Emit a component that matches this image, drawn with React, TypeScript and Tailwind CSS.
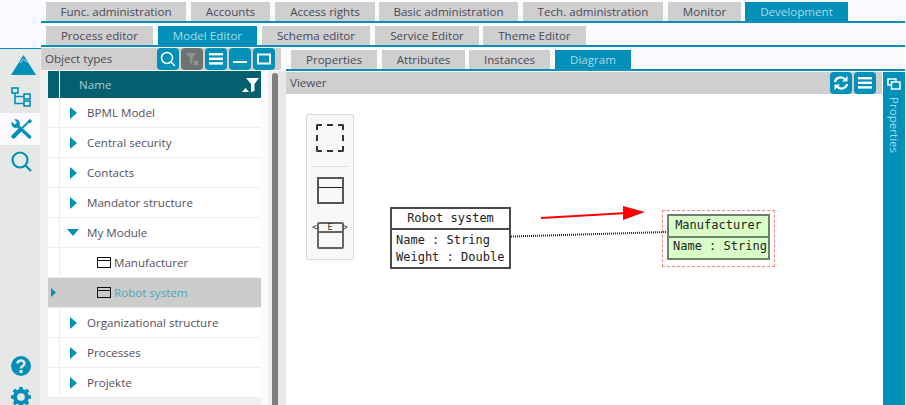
import React from "react";

const font = { fontFamily: '"Open Sans", sans-serif' };

const topTabs = [
  { label: "Func. administration", w: "w-[140px]" },
  { label: "Accounts", w: "w-[79px]" },
  { label: "Access rights", w: "w-[100px] mr-[-1px]" },
  { label: "Basic administration", w: "w-[139px]" },
  { label: "Tech. administration", w: "w-[140px]" },
  { label: "Monitor", w: "w-[73px] mr-[-1px]" },
  { label: "Development", w: "w-[103px]", active: true },
];

const subTabs = [
  { label: "Process editor", w: "w-[107px]" },
  { label: "Model Editor", w: "w-[99px]", active: true },
  { label: "Schema editor", w: "w-[108px]" },
  { label: "Service Editor", w: "w-[104px] mr-[-1px]" },
  { label: "Theme Editor", w: "w-[103px]" },
];

const detailTabs = [
  { label: "Properties", w: "w-[86px]" },
  { label: "Attributes", w: "w-[83px] mr-[-1px]" },
  { label: "Instances", w: "w-[81px]" },
  { label: "Diagram", w: "w-[76px]", active: true },
];

const Tab = ({ label, w, active }: { label: string; w: string; active?: boolean }) => (
  <div
    className={`${w} h-[19px] flex items-center justify-center text-[11.6px] leading-none ${
      active ? "bg-[#0090b8] text-[#a8dceb]" : "bg-[#cfcfcf] text-[#4a4a58]"
    }`}
  >
    {label}
  </div>
);

const IconBtn = ({ children, gray }: { children: React.ReactNode; gray?: boolean }) => (
  <div
    className={`w-[22px] h-[22px] rounded-[4px] flex items-center justify-center ${
      gray ? "bg-[#6f7272]" : "bg-[#0090b8]"
    }`}
  >
    {children}
  </div>
);

const MenuIcon = () => (
  <svg width="14" height="12" viewBox="0 0 14 12" fill="#fff">
    <rect width="14" height="2.4" />
    <rect y="4.6" width="14" height="2.4" />
    <rect y="9.2" width="14" height="2.4" />
  </svg>
);

const Arrow = ({ small }: { small?: boolean }) =>
  small ? (
    <svg width="5" height="9" viewBox="0 0 5 9" className="fill-[#0090b8]">
      <path d="M0 0 L5 4.5 L0 9 Z" />
    </svg>
  ) : (
    <svg width="7" height="12" viewBox="0 0 7 12" className="fill-[#0090b8]">
      <path d="M0 0 L7 6 L0 12 Z" />
    </svg>
  );

const ClassIcon = () => (
  <svg width="14" height="11" viewBox="0 0 14 11" fill="none" stroke="#111" strokeWidth="1">
    <rect x="0.5" y="0.5" width="13" height="10" />
    <path d="M0.5 3.5 H13.5" />
  </svg>
);

const Row = ({ label }: { label: string }) => (
  <div className="h-[30px] flex border-b border-[#eeeeee] bg-white">
    <div className="w-[12px] border-r border-[#eeeeee]" />
    <div className="w-[10px]" />
    <div className="w-[17px] flex items-center">
      <Arrow />
    </div>
    <div className="flex items-center text-[11.6px] text-[#55505c]">{label}</div>
  </div>
);

const Sidebar = () => (
  <div className="w-[41px] shrink-0 flex flex-col">
    <div className="h-[49px] shrink-0 border-b border-[#0090b8]" />
    <div className="h-[64px] shrink-0 bg-[#e6e8e8] border-r border-[#f0f0f0] flex flex-col items-start pl-[11px]">
      <svg width="25" height="20" viewBox="0 0 25 20" className="mt-[6px] shrink-0">
        <path d="M12.5 0 L25 20 H0 Z" fill="#0090b8" />
        <path d="M9 8 L12.5 4 L16 7.5" fill="none" stroke="#cfe6ee" strokeWidth="1" />
      </svg>
      <svg width="20" height="20" viewBox="0 0 20 20" fill="none" stroke="#0090b8" strokeWidth="1.6" className="mt-[12px] shrink-0">
        <rect x="1" y="1" width="6" height="5" />
        <rect x="13" y="7" width="6" height="5" />
        <rect x="13" y="14" width="6" height="5" />
        <path d="M4 6 V16.5 H13 M4 9.5 H13" />
      </svg>
    </div>
    <div className="h-[32px] shrink-0 bg-[#fbfbff] border-r border-[#f0f0f0] pl-[11px] pt-[6px]">
      <svg width="21" height="20" viewBox="0 0 21 20" fill="none" stroke="#0090b8">
        <path d="M2.5 17.5 L9 11" strokeWidth="4.2" strokeLinecap="round" />
        <path d="M8 12 L18 2.5" strokeWidth="2" />
        <path d="M17 2 L19 0.5 L20.5 2 L19 4 Z" fill="#0090b8" strokeWidth="1" />
        <path d="M0.6 2.6 L3.6 5.4 L6 3.2 L3.2 0.4 C7 -0.6 10 2.6 8.4 6.4 L19.6 16.6 C20.6 17.6 20.6 18.4 19.8 19.2 C19 20 18.2 20 17.2 19 L6.2 8.6 C2.8 10 -0.6 7 0.6 2.6 Z" fill="#0090b8" stroke="none" />
      </svg>
    </div>
    <div className="flex-1 bg-[#e6e8e8] border-r border-[#f0f0f0] flex flex-col items-start pl-[11px] overflow-hidden">
      <svg width="21" height="21" viewBox="0 0 21 21" fill="none" stroke="#0090b8" strokeWidth="2.2" className="mt-[6px] shrink-0">
        <circle cx="9" cy="9" r="7.5" />
        <path d="M14.5 14.5 L20 20" />
      </svg>
      <svg width="20" height="20" viewBox="0 0 20 20" className="mt-[184px] shrink-0">
        <circle cx="10" cy="10" r="10" fill="#0090b8" />
        <path d="M6.5 7.5 C6.5 3.5 13.5 3.500 13.5 7.5 C13.5 10 10 9.8 10 12.5" fill="none" stroke="#e6e8e8" strokeWidth="2.6" />
        <rect x="8.5" y="14" width="3" height="3" fill="#e6e8e8" />
      </svg>
      <svg width="20" height="20" viewBox="0 0 22 22" className="mt-[11px] shrink-0">
        <circle cx="11" cy="11" r="6.5" fill="none" stroke="#0090b8" strokeWidth="4.5" />
        <path d="M11 0 V5 M11 17 V22 M0 11 H5 M17 11 H22 M3.2 3.2 L6.7 6.7 M15.3 15.3 L18.8 18.8 M3.2 18.8 L6.7 15.3 M15.3 6.7 L18.8 3.2" stroke="#0090b8" strokeWidth="4" />
      </svg>
    </div>
  </div>
);

const ObjectTypes = () => (
  <div className="w-[245px] shrink-0 h-full flex flex-col bg-[#f0f0f0] overflow-hidden">
    <div className="h-[23px] shrink-0 bg-[#fbfbff]">
      <div className="h-[22px] w-[240px] flex bg-[#cfcfcf]">
        <div className="flex-1 pl-[4px] text-[11.6px] leading-[22px] text-[#4a4a58]">Object types</div>
        <div className="flex gap-[2px] mr-[6px]">
          <IconBtn>
            <svg width="16" height="16" viewBox="0 0 16 16" fill="none" stroke="#fff" strokeWidth="1.5">
              <circle cx="7" cy="7" r="5.5" />
              <path d="M11 11 L15 15" />
            </svg>
          </IconBtn>
          <IconBtn gray>
            <svg width="14" height="14" viewBox="0 0 14 14">
              <path d="M1 1 H11 L7.5 6 V11 L5 12 V6 Z" fill="#8f9292" />
              <path d="M9 9 L13 13 M13 9 L9 13" stroke="#9ea0a0" strokeWidth="1.5" />
            </svg>
          </IconBtn>
          <IconBtn>
            <MenuIcon />
          </IconBtn>
          <IconBtn>
            <svg width="14" height="14" viewBox="0 0 14 14" fill="#fff">
              <rect y="9" width="14" height="2" />
            </svg>
          </IconBtn>
          <IconBtn>
            <svg width="14" height="12" viewBox="0 0 14 12" fill="none" stroke="#fff" strokeWidth="2">
              <rect x="1" y="1.5" width="12" height="9" />
            </svg>
          </IconBtn>
        </div>
      </div>
    </div>
    <div className="flex-1 flex min-h-0">
      <div className="w-[213px] ml-[7px] shrink-0 flex flex-col">
        <div className="h-[27px] shrink-0 bg-[#055f6e] flex items-center relative">
          <div className="w-[12px] h-full border-r border-white" />
          <span className="ml-[19px] text-[11.6px] text-[#a9cdd3]">Name</span>
          <svg width="17" height="14" viewBox="0 0 17 14" fill="#fff" className="absolute right-[2px] top-[7px]">
            <path d="M4 0 H17 L12.5 6 V13 L9 14 V6 Z" />
            <path d="M0 14 L3.5 10 L7 14 Z" />
          </svg>
        </div>
        <Row label="BPML Model" />
        <Row label="Central security" />
        <Row label="Contacts" />
        <Row label="Mandator structure" />
        <div className="h-[30px] flex border-b border-[#eeeeee] bg-white">
          <div className="w-[12px] border-r border-[#eeeeee]" />
          <div className="w-[7px]" />
          <div className="w-[20px] flex items-center">
            <svg width="12" height="7" viewBox="0 0 12 7" className="fill-[#0090b8]">
              <path d="M0 0 H12 L6 7 Z" />
            </svg>
          </div>
          <div className="flex items-center text-[11.6px] text-[#55505c]">My Module</div>
        </div>
        <div className="h-[30px] flex items-center border-b border-[#eeeeee] bg-white">
          <div className="w-[12px] h-full border-r border-[#eeeeee]" />
          <div className="ml-[37px] flex items-center gap-[3px] text-[11.6px] text-[#55505c]">
            <ClassIcon />
            Manufacturer
          </div>
        </div>
        <div className="h-[30px] flex items-center border-b border-[#eeeeee] bg-[#cccccc]">
          <div className="w-[12px] flex items-center pl-[3px]">
            <Arrow small />
          </div>
          <div className="ml-[37px] flex items-center gap-[3px] text-[11.6px] text-[#4aa3bd]">
            <ClassIcon />
            Robot system
          </div>
        </div>
        <Row label="Organizational structure" />
        <Row label="Processes" />
        <Row label="Projekte" />
      </div>
      <div className="w-[7px] bg-[#fbfbff]" />
      <div className="w-[4px] bg-[#eeeeee]" />
      <div className="w-[6px] mt-[2px] rounded-t-[3px] bg-[#7f8080]" />
      <div className="flex-1 bg-[#e6e8e8]" />
    </div>
  </div>
);

const Diagram = () => (
  <div className="flex-1 relative bg-white overflow-hidden">
    {/* connector and arrow */}
    <svg width="596" height="311" className="absolute left-0 top-0">
      <path d="M225 142.5 L381 138" stroke="#222" strokeWidth="2" strokeDasharray="1 1" fill="none" />
      <path d="M255 124 L341 119" stroke="#f00" strokeWidth="2" fill="none" />
      <path d="M337 112 L359 118 L337 126 Z" fill="#f00" />
    </svg>

    {/* palette */}
    <div className="absolute left-[20px] top-[20px] w-[48px] h-[146px] bg-[#f8f8f8] border border-[#d8d8d8] rounded-[2px] flex flex-col items-center">
      <div className="mt-[9px] w-[28px] h-[28px] border-2 border-dashed border-[#333] rounded-[2px]" />
      <div className="mt-[14px] w-[36px] h-px bg-[#dddddd]" />
      <div className="mt-[10px] w-[27px] h-[27px] border-2 border-[#555] flex flex-col">
        <div className="h-[9px] border-b border-[#222]" />
      </div>
      <div className="mt-[18px] w-[27px] h-[27px] border-2 border-[#666] rounded-[2px] flex flex-col">
        <div className="h-[9px] border-b-2 border-[#666] flex justify-center items-center font-['DejaVu_Sans_Mono'] text-[8.5px] leading-none text-[#333] whitespace-pre">
          {"<  E  >"}
        </div>
      </div>
    </div>

    {/* Robot system */}
    <div className="absolute left-[104px] top-[113px] w-[121px] h-[62px] border-2 border-[#4a4a4a] bg-white font-['DejaVu_Sans_Mono'] text-[12px] leading-[17px] text-[#222]">
      <div className="h-[21px] border-b-2 border-[#4a4a4a] text-center leading-[18px]">Robot system</div>
      <div className="pl-[4px] pt-[2px]">
        <div>Name : String</div>
        <div>Weight : Double</div>
      </div>
    </div>

    {/* Manufacturer, selected */}
    <div className="absolute left-[376px] top-[116px] w-[113px] h-[57px] border border-dashed border-[#ff7f7f] flex justify-center pt-[3px]">
      <div className="w-[103px] h-[46px] border-2 border-[#6f7f6a] bg-[#d9ffc9] font-['DejaVu_Sans_Mono'] text-[12px] leading-[17px] text-[#222]">
        <div className="h-[22px] border-b-2 border-[#6f7f6a] text-center leading-[19px]">Manufacturer</div>
        <div className="pl-[4px] whitespace-nowrap">Name : String</div>
      </div>
    </div>
  </div>
);

const DetailPanel = () => (
  <div className="flex-1 min-w-0 h-full flex flex-col bg-white">
    <div className="h-[23px] shrink-0 flex gap-[5px] pl-[5px] pt-[2px] bg-[#fbfbff] border-b-2 border-[#0090b8] mr-px">
      {detailTabs.map((t) => (
        <Tab key={t.label} {...t} />
      ))}
    </div>
    <div className="flex-1 flex min-h-0 mt-[1px]">
      <div className="flex-1 flex flex-col min-w-0">
        <div className="h-[22px] shrink-0 bg-[#cfcfcf] flex items-center">
          <span className="flex-1 pl-[4px] text-[11.6px] text-[#4a4a58]">Viewer</span>
          <div className="flex gap-[2px] pr-[6px]">
            <IconBtn>
              <svg width="16" height="16" viewBox="0 0 16 16" fill="none" stroke="#fff" strokeWidth="2.2">
                <path d="M2 7 C2.5 2.5 9 0.5 12.5 5" />
                <path d="M14 9 C13.5 13.5 7 15.5 3.5 11" />
                <path d="M14.5 1 V6.5 H9 Z M1.5 15 V9.5 H7 Z" fill="#fff" stroke="none" />
              </svg>
            </IconBtn>
            <IconBtn>
              <MenuIcon />
            </IconBtn>
          </div>
        </div>
        <Diagram />
      </div>
      <div className="w-[22px] ml-px mr-px shrink-0 bg-[#0090b8] flex flex-col items-center">
        <svg width="14" height="12" viewBox="0 0 14 12" fill="none" stroke="#fff" strokeWidth="1.5" className="mt-[6px] shrink-0">
          <rect x="1" y="1" width="8" height="6" />
          <rect x="4.5" y="4" width="8.5" height="7" fill="#0090b8" />
        </svg>
        <span className="mt-[7px] text-[11.6px] leading-[22px] text-[#a8dceb] [writing-mode:vertical-rl]">Properties</span>
      </div>
    </div>
  </div>
);

export default function App() {
  return (
    <div className="w-[906px] h-[405px] flex overflow-hidden bg-[#fbfbff]" style={font}>
      <Sidebar />
      <div className="flex-1 flex flex-col min-w-0">
        <div className="h-[23px] shrink-0 flex gap-[5px] pl-[5px] pt-[2px] border-b-2 border-[#0090b8] mr-px">
          {topTabs.map((t) => (
            <Tab key={t.label} {...t} />
          ))}
        </div>
        <div className="h-[24px] shrink-0 flex gap-[5px] pl-[5px] pt-[3px] border-b-2 border-[#0090b8] mr-px">
          {subTabs.map((t) => (
            <Tab key={t.label} {...t} />
          ))}
        </div>
        <div className="flex-1 flex min-h-0 pt-px">
          <ObjectTypes />
          <DetailPanel />
        </div>
      </div>
    </div>
  );
}
